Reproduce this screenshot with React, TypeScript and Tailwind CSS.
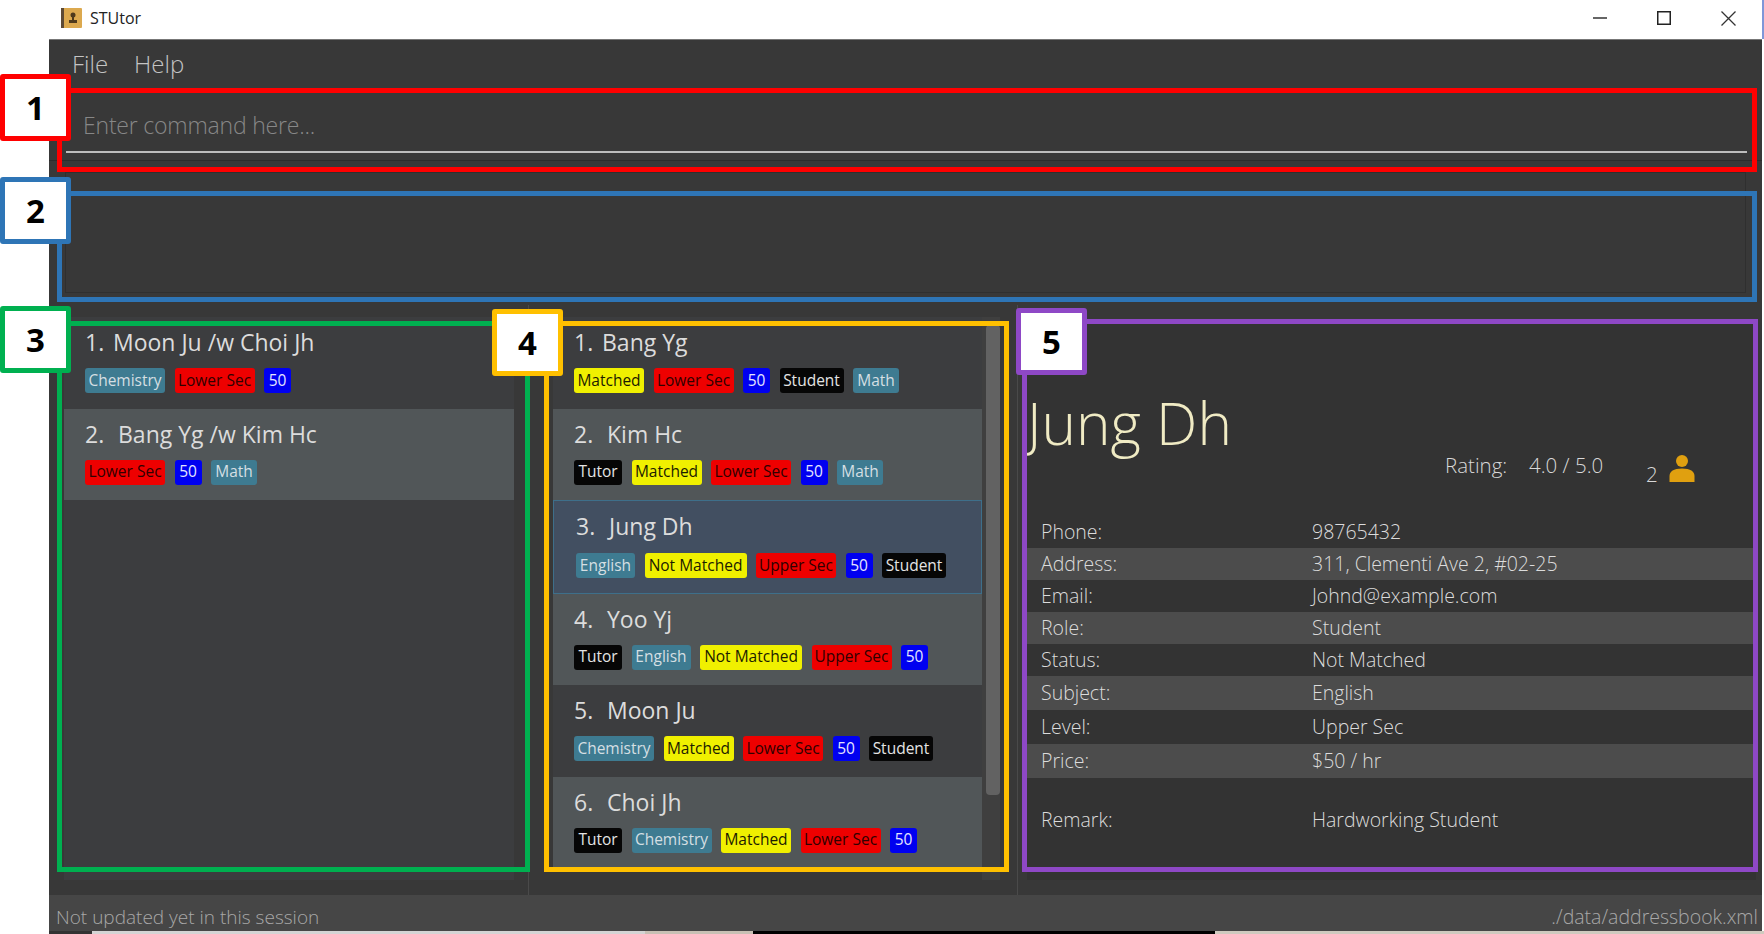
import React from 'react';

type TagKind = 'subject' | 'level' | 'price' | 'role' | 'status';

interface Tag {
  text: string;
  kind: TagKind;
  width: string;
}

interface Person {
  name: string;
  tags: Tag[];
}

const tagStyles: Record<TagKind, string> = {
  subject: 'bg-[#3e7b91] text-[#d5dfe3]',
  level: 'bg-[#ee0000] text-[#300000]',
  price: 'bg-[#0000f0] text-[#e4e4ff]',
  role: 'bg-[#060606] text-[#e4e4e4]',
  status: 'bg-[#f0f000] text-[#1c1c00]',
};

const chemistry: Tag = { text: 'Chemistry', kind: 'subject', width: 'w-[80px]' };
const english: Tag = { text: 'English', kind: 'subject', width: 'w-[59px]' };
const math: Tag = { text: 'Math', kind: 'subject', width: 'w-[46px]' };
const lower: Tag = { text: 'Lower Sec', kind: 'level', width: 'w-[80px]' };
const upper: Tag = { text: 'Upper Sec', kind: 'level', width: 'w-[80px]' };
const fifty: Tag = { text: '50', kind: 'price', width: 'w-[27px]' };
const student: Tag = { text: 'Student', kind: 'role', width: 'w-[64px]' };
const tutor: Tag = { text: 'Tutor', kind: 'role', width: 'w-[48px]' };
const matched: Tag = { text: 'Matched', kind: 'status', width: 'w-[70px]' };
const notMatched: Tag = { text: 'Not Matched', kind: 'status', width: 'w-[102px]' };

const matches: Person[] = [
  { name: 'Moon Ju /w Choi Jh', tags: [chemistry, lower, fifty] },
  { name: 'Bang Yg /w Kim Hc', tags: [lower, fifty, math] },
];

const people: Person[] = [
  { name: 'Bang Yg', tags: [matched, lower, fifty, student, math] },
  { name: 'Kim Hc', tags: [tutor, matched, lower, fifty, math] },
  { name: 'Jung Dh', tags: [english, notMatched, upper, fifty, student] },
  { name: 'Yoo Yj', tags: [tutor, english, notMatched, upper, fifty] },
  { name: 'Moon Ju', tags: [chemistry, matched, lower, fifty, student] },
  { name: 'Choi Jh', tags: [tutor, chemistry, matched, lower, fifty] },
];

const details = [
  ['Phone:', '98765432'],
  ['Address:', '311, Clementi Ave 2, #02-25'],
  ['Email:', 'Johnd@example.com'],
  ['Role:', 'Student'],
  ['Status:', 'Not Matched'],
  ['Subject:', 'English'],
  ['Level:', 'Upper Sec'],
  ['Price:', '$50 / hr'],
];

const PersonCard = ({ person, index, selected }: { person: Person; index: number; selected?: boolean }) => (
  <div
    className={`shrink-0 ${selected ? 'h-[93.5px] border border-[#3e6f8a] bg-[#424f61] pl-[22px]' : 'h-[91.5px] pl-[21px]'} ${
      !selected && index % 2 === 1 ? 'bg-[#515658]' : ''
    } ${!selected && index % 2 === 0 ? 'bg-[#3c3d3f]' : ''}`}
  >
    <div className="flex items-center text-[23px] font-medium text-[#dcdcdc] h-[25px] mt-[13px]">
      <span className={index === 0 ? 'w-[28px]' : 'w-[33px]'}>{index + 1}.</span>
      <span>{person.name}</span>
    </div>
    <div className={`flex gap-[9.5px] ${selected ? 'mt-[14px]' : 'mt-[13px]'}`}>
      {person.tags.map((tag) => (
        <span
          key={tag.text}
          className={`h-[25px] rounded-[3px] flex items-center justify-center text-[15.5px] whitespace-nowrap ${tag.width} ${tagStyles[tag.kind]}`}
        >
          {tag.text}
        </span>
      ))}
    </div>
  </div>
);

const Marker = ({ label, className }: { label: string; className: string }) => (
  <div
    className={`absolute w-[71px] h-[67px] bg-white border-[5px] rounded-[3px] flex items-center justify-center text-[33px] font-bold text-black ${className}`}
  >
    {label}
  </div>
);

export default function App() {
  return (
    <div className="relative h-[934px] w-full overflow-hidden bg-white flex flex-col font-['Open_Sans',sans-serif]">
      <div className="h-[39px] shrink-0 flex items-center pb-[3px] border-r-2 border-[#7f97d8]">
        <svg width="21" height="20" viewBox="0 0 21 20" className="ml-[61px]">
          <rect width="21" height="20" rx="1" fill="#dca94f" />
          <rect width="3" height="20" fill="#5d4a35" />
          <circle cx="12" cy="7" r="2.5" fill="#4f3a1c" />
          <path d="M11 9h2v3h3v3H8v-3h3z" fill="#4f3a1c" />
        </svg>
        <span className="ml-[8px] text-[16px] text-[#222]">STUtor</span>
        <div className="ml-auto flex items-center">
          <svg width="14" height="14" viewBox="0 0 14 14" className="mr-[50px]">
            <path d="M0 7h14" stroke="#333" strokeWidth="1.5" />
          </svg>
          <svg width="14" height="14" viewBox="0 0 14 14" className="mr-[50px]">
            <rect x="0.75" y="0.75" width="12.5" height="12.5" fill="none" stroke="#222" strokeWidth="1.5" />
          </svg>
          <svg width="15" height="15" viewBox="0 0 15 15" className="mr-[26px]">
            <path d="M0.5 0.5l14 14M14.5 0.5l-14 14" stroke="#333" strokeWidth="1.3" />
          </svg>
        </div>
      </div>

      <div className="flex-1 min-h-0 ml-[49px] mr-[2px] bg-[#383838] border-t border-[#777] flex flex-col">
        <div className="h-[48px] shrink-0 flex items-center pl-[23px] gap-[26px] text-[24px] font-light text-[#c4c4c4]">
          <span>File</span>
          <span>Help</span>
        </div>

        <div className="h-[73px] shrink-0 pl-[17px] pr-[15px] border-b border-[#2c2c2c]">
          <div className="h-[65px] border-b-2 border-[#bdbdbd] pl-[17px] pt-[20px] text-[23px] tracking-[-0.2px] leading-[34px] font-light text-[#878787]">
            Enter command here...
          </div>
        </div>

        <div className="h-[144px] shrink-0 px-[16px] pt-[11px]">
          <div className="h-[121px] border border-[#2f2f2f]" />
        </div>

        <div className="flex-1 min-h-0 flex">
          <div className="w-[480px] shrink-0 pl-[15px] pr-[14px] pt-[12px] pb-[15px] border-r border-[#4a4a4a]">
            <div className="h-full bg-[#3c3d3f] flex flex-col">
              {matches.map((match, i) => (
                <PersonCard key={match.name} person={match} index={i} />
              ))}
            </div>
          </div>

          <div className="w-[489px] shrink-0 pl-[24px] pr-[17px] pt-[12px] pb-[15px] border-r border-[#4a4a4a] flex">
            <div className="w-[429px] overflow-hidden flex flex-col">
              {people.map((person, i) => (
                <PersonCard key={person.name} person={person} index={i} selected={i === 2} />
              ))}
            </div>
            <div className="flex-1 bg-[#3f3f3f] pl-[4px]">
              <div className="w-[14px] h-[470px] mt-[8px] rounded-[4px] bg-[#626262]" />
            </div>
          </div>

          <div className="flex-1 min-w-0 pl-[9px] pr-[6px] pt-[15px] pb-[15px]">
            <div className="h-full bg-[#333333] overflow-hidden">
              <div className="h-[125px] pt-[66px] text-[58.5px] leading-[72px] font-light text-[#f0ebc4] whitespace-nowrap">
                Jung Dh
              </div>
              <div className="flex items-center h-[40px] pl-[418px] text-[20.5px] font-light text-[#d8d8d8]">
                <span className="w-[84px]">Rating:</span>
                <span className="w-[117px]">4.0 / 5.0</span>
                <span className="w-[23px] mt-[18px]">2</span>
                <svg width="26" height="27" viewBox="0 0 26 27" className="mt-[6px]">
                  <circle cx="13" cy="6" r="6" fill="#e0a010" />
                  <path d="M0.5 27v-6c0-4.5 4-7.5 12.5-7.5s12.5 3 12.5 7.5v6z" fill="#e0a010" />
                </svg>
              </div>
              <div className="mt-[30.5px]">
                {details.map(([label, value], i) => (
                  <div
                    key={label}
                    className={`flex items-center ${i < 5 ? 'h-[32px]' : 'h-[34px]'} pl-[14px] text-[19.5px] font-light text-[#dcdcdc] ${
                      i % 2 === 1 ? 'bg-[#4c4c4c]' : ''
                    }`}
                  >
                    <span className="w-[271px]">{label}</span>
                    <span>{value}</span>
                  </div>
                ))}
                <div className="flex items-center h-[33px] mt-[26px] pl-[14px] text-[19.5px] font-light text-[#dcdcdc]">
                  <span className="w-[271px]">Remark:</span>
                  <span>Hardworking Student</span>
                </div>
              </div>
            </div>
          </div>
        </div>

        <div className="h-[36px] shrink-0 bg-[#464646] flex items-center justify-between pl-[7px] pr-[4px] pt-[8px] text-[19px] font-light text-[#a8a8a8]">
          <span>Not updated yet in this session</span>
          <span className="text-[19.5px]">./data/addressbook.xml</span>
        </div>
      </div>

      <div className="h-[3px] shrink-0 flex">
        <div className="w-[49px] bg-white" />
        <div className="w-[43px] bg-[#333]" />
        <div className="w-[553px] bg-[#d4d4d4]" />
        <div className="w-[108px] bg-[#c8c0b4]" />
        <div className="w-[462px] bg-black" />
        <div className="flex-1 bg-[#cfcabf]" />
      </div>

      <div className="absolute left-[57px] top-[88px] w-[1700px] h-[84px] border-[5px] border-[#ff0000]" />
      <div className="absolute left-[57px] top-[191px] w-[1700px] h-[111px] border-[5px] border-[#2e75b6]" />
      <div className="absolute left-[57px] top-[321px] w-[473px] h-[551px] border-[5px] border-[#00b050]" />
      <div className="absolute left-[544px] top-[321px] w-[465px] h-[551px] border-[5px] border-[#ffc000]" />
      <div className="absolute left-[1022px] top-[319px] w-[736px] h-[553px] border-[5px] border-[#8e48c6]" />

      <Marker label="1" className="left-0 top-[74px] border-[#ff0000]" />
      <Marker label="2" className="left-0 top-[177px] border-[#2e75b6]" />
      <Marker label="3" className="left-0 top-[306px] border-[#00b050]" />
      <Marker label="4" className="left-[492px] top-[309px] border-[#ffc000]" />
      <Marker label="5" className="left-[1016px] top-[308px] border-[#8e48c6]" />
    </div>
  );
}
